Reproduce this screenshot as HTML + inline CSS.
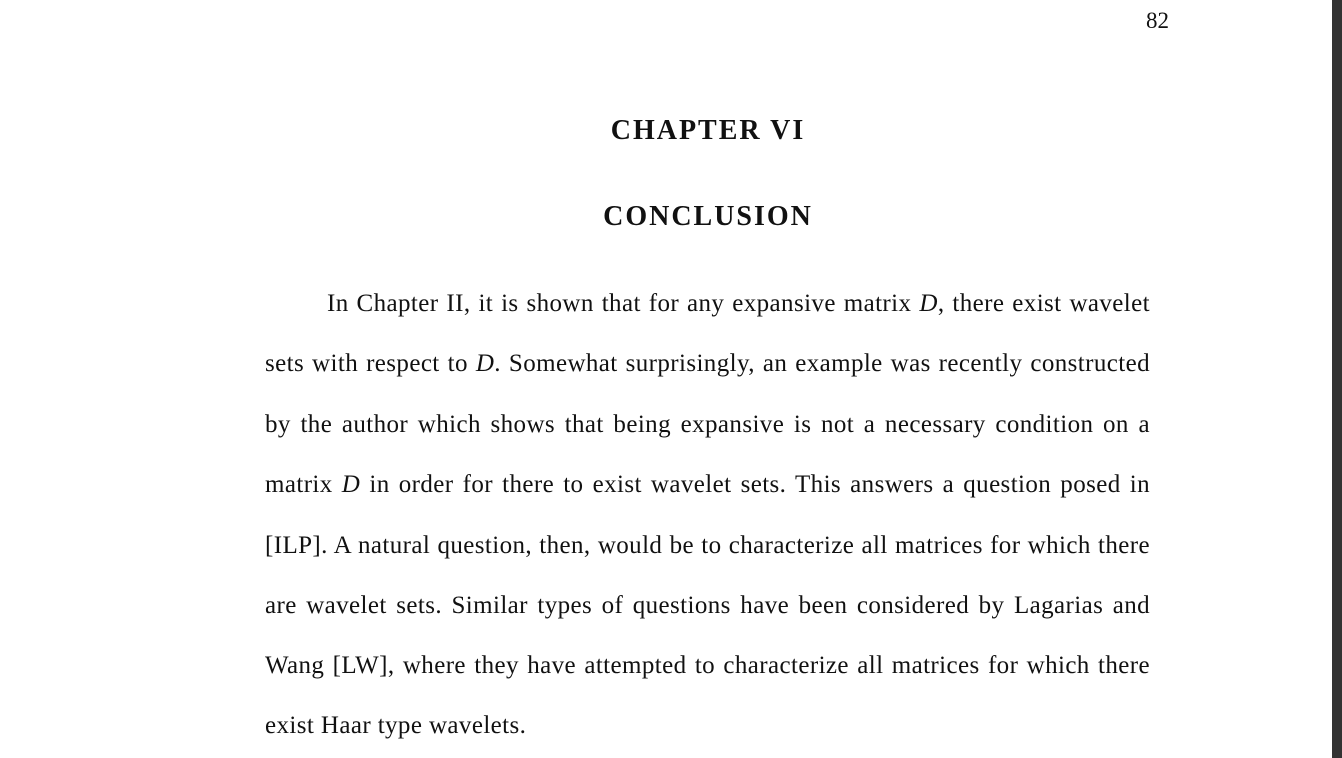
<!DOCTYPE html>
<html><head><meta charset="utf-8"><style>
html,body{margin:0;padding:0;width:1342px;height:758px;overflow:hidden;background:#fff;}
body{position:relative;font-family:"Liberation Serif",serif;color:#111;}
.l{position:absolute;left:265px;width:885px;font-size:25px;line-height:30px;height:30px;text-align:justify;text-align-last:justify;letter-spacing:0.4px;white-space:normal;}
.h{position:absolute;left:0;width:1416px;text-align:center;font-weight:bold;font-size:28px;line-height:32px;letter-spacing:2px;}
.bar{position:absolute;left:1332px;top:0;width:10px;height:758px;background:#333;}
</style></head><body>
<div style="position:absolute;left:1146px;top:8px;font-size:23px;line-height:26px;">82</div>
<div class="h" style="top:115px;">CHAPTER VI</div>
<div class="h" style="top:201px;">CONCLUSION</div>
<div class="l" style="left:327px;width:823px;top:289px;">In Chapter II, it is shown that for any expansive matrix <i>D</i>, there exist wavelet</div>
<div class="l" style="top:349px;">sets with respect to <i>D</i>. Somewhat surprisingly, an example was recently constructed</div>
<div class="l" style="top:410px;">by the author which shows that being expansive is not a necessary condition on a</div>
<div class="l" style="top:470px;">matrix <i>D</i> in order for there to exist wavelet sets. This answers a question posed in</div>
<div class="l" style="top:531px;">[ILP]. A natural question, then, would be to characterize all matrices for which there</div>
<div class="l" style="top:591px;">are wavelet sets. Similar types of questions have been considered by Lagarias and</div>
<div class="l" style="top:651px;">Wang [LW], where they have attempted to characterize all matrices for which there</div>
<div class="l" style="top:711px;text-align-last:left;">exist Haar type wavelets.</div>
<div class="bar"></div>
</body></html>
